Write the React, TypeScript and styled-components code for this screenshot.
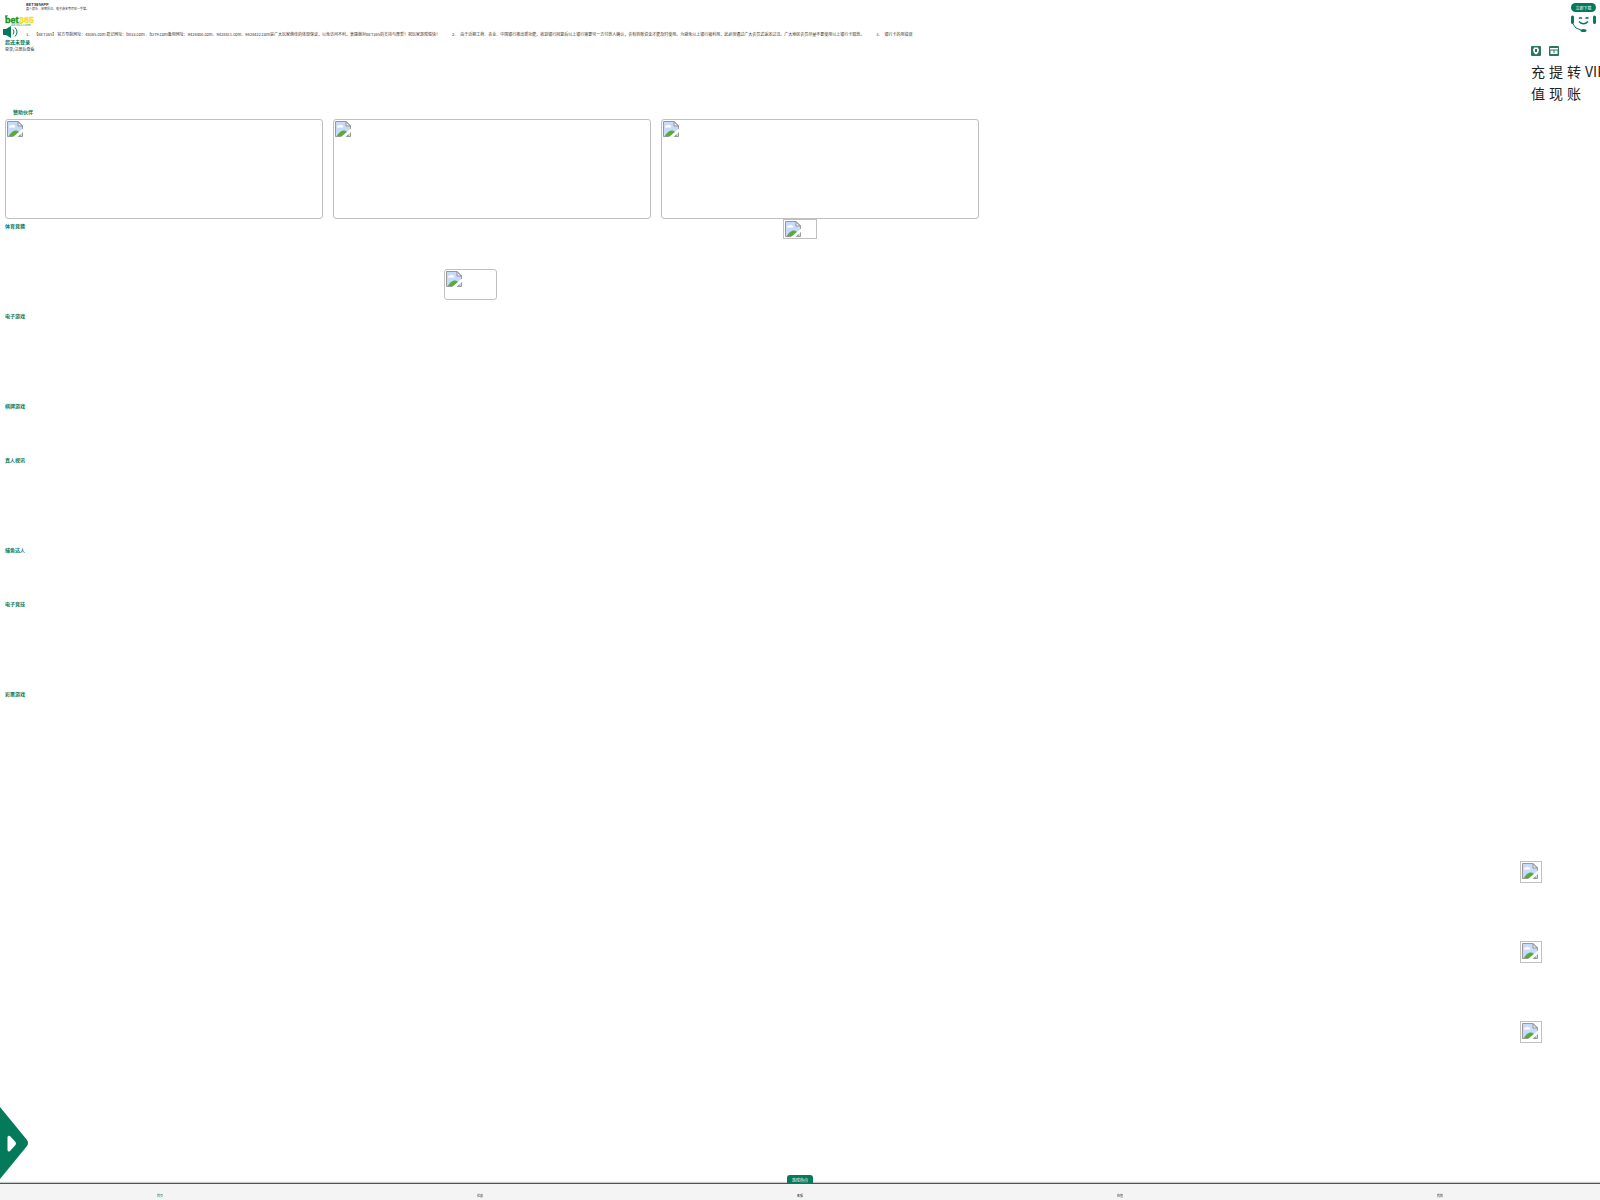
import React from "react";
import styled, { createGlobalStyle } from "styled-components";

const GREEN = "#047a5b";

const GlobalStyle = createGlobalStyle`
  * { box-sizing: border-box; }
  body {
    margin: 0;
    background: #fff;
    color: #333;
    font-family: "Noto Sans CJK SC", sans-serif;
    font-size: 4px;
    line-height: 6px;
  }
  button { font-family: inherit; border: 0; padding: 0; margin: 0; background: none; cursor: pointer; }
  a { color: inherit; text-decoration: none; }
  h1, h2, p, ul, ol { margin: 0; padding: 0; list-style: none; font-weight: normal; }
  svg { display: block; }
`;

const Page = styled.div`
  min-height: 100vh;
  overflow: hidden;
`;

const Top = styled.header`
  display: flex;
  justify-content: space-between;
  height: 105px;
`;

const TopMain = styled.div`
  flex: 1;
  min-width: 0;
`;

const AppInfo = styled.div`
  padding: 2px 0 0 26px;
  height: 15px;
`;

const AppName = styled.h1`
  font-size: 4px;
  line-height: 5px;
  font-weight: bold;
`;

const AppSlogan = styled.p`
  font-size: 3px;
  line-height: 4px;
`;

const Logo = styled.a`
  display: block;
  width: 29px;
  height: 11px;
  margin-left: 5px;
  text {
    font-family: "Liberation Sans", sans-serif;
  }
`;

const Notice = styled.div`
  display: flex;
  align-items: center;
  height: 12px;
  padding-left: 3px;
  gap: 8px;
`;

const NoticeList = styled.ol`
  display: flex;
  gap: 12px;
  padding-top: 4px;
  white-space: nowrap;
  li { display: flex; gap: 2px; }
`;

const Account = styled.div`
  padding: 0 0 0 5px;
`;

const AccountState = styled.p`
  font-size: 5px;
  line-height: 8px;
  font-weight: bold;
  color: ${GREEN};
`;

const TopSide = styled.div`
  width: 69px;
  padding-top: 3px;
`;

const SideTools = styled.div`
  display: flex;
  flex-direction: column;
  align-items: flex-end;
  gap: 1px;
  height: 43px;
  padding-right: 4px;
`;

const Download = styled.button`
  width: 25px;
  height: 9px;
  border-radius: 5px;
  background: ${GREEN};
  color: #fff;
  font-size: 4px;
  line-height: 6px;
`;

const QuickList = styled.ul`
  display: flex;
  gap: 8px;
`;

const QuickItem = styled.li`
  flex: none;
  width: 10px;
`;

const QuickLink = styled.a`
  display: block;
  color: #222;
  font-size: 14px;
  line-height: 22px;
`;

const QuickIcon = styled.span`
  display: block;
  height: 14px;
`;

const Title = styled.h2<{ $inset?: boolean }>`
  padding-left: ${(p) => (p.$inset ? "13px" : "5px")};
  color: ${GREEN};
  font-size: 5px;
  line-height: 14px;
  font-weight: bold;
`;

const Sponsors = styled.div`
  display: flex;
  gap: 10px;
  padding-left: 5px;
`;

const Frame = styled.span<{ $w: string; $h: number; $round?: boolean }>`
  display: block;
  width: ${(p) => p.$w};
  height: ${(p) => p.$h}px;
  padding: 1px;
  border: 1px solid #c0c0c0;
  border-radius: ${(p) => (p.$round ? "3px" : "0")};
  background: #fff;
`;

const Section = styled.section<{ $tall?: boolean }>`
  height: ${(p) => (p.$tall ? "90px" : "54px")};
`;

const SectionHead = styled.div`
  display: grid;
  grid-template-columns: 1fr auto 1fr;
  align-items: start;
`;

const SectionBody = styled.div`
  padding: 30px 0 0 27.75%;
`;

const Floating = styled.aside`
  position: fixed;
  right: 58px;
  bottom: 157px;
  display: flex;
  flex-direction: column;
  gap: 58px;
`;

const Drawer = styled.button`
  position: fixed;
  left: 0;
  bottom: 20px;
`;

const Footer = styled.nav`
  position: fixed;
  left: 0;
  right: 0;
  bottom: 0;
  height: 17px;
  display: grid;
  grid-template-columns: repeat(5, 1fr);
  border-top: 1px solid ${GREEN};
  box-shadow: 0 -1px 1px #ccc;
  background: #f4f4f4;
`;

const Tab = styled.a<{ $active?: boolean }>`
  padding-top: 9px;
  text-align: center;
  font-size: 3px;
  line-height: 6px;
  color: ${(p) => (p.$active ? GREEN : "#333")};
`;

const HotTab = styled.button`
  position: absolute;
  left: 50%;
  bottom: 100%;
  width: 26px;
  height: 9px;
  margin-left: -13px;
  border-radius: 3px 3px 0 0;
  background: ${GREEN};
  color: #fff;
  font-size: 4px;
  line-height: 8px;
`;

function Picture(props: { w: string; h: number; round?: boolean }) {
  return (
    <Frame $w={props.w} $h={props.h} $round={props.round}>
      <svg width="16" height="16" viewBox="0 0 16 16">
        <path d="M0.500 0.500H11L15.500 5V15.500H0.500Z" fill="#c8dafa" />
        <path d="M2 6a1.500 1.500 0 0 1 2-1.500 1.800 1.800 0 0 1 3 0A1.200 1.200 0 0 1 8 6.500H2Z" fill="#fff" />
        <path d="M1.500 15.500C4 11 7 9.500 9 9.500S12 11 13.500 12.500V15.500Z" fill="#57ad35" />
        <path d="M11 .5V5H15.500Z" fill="#f5f5f5" stroke="#909090" />
        <path d="M.5 15.500V.5H11L15.500 5V15.500Z" fill="none" stroke="#999" />
        <path d="M16 7.500V11L10.500 16H6Z" fill="#fff" />
      </svg>
    </Frame>
  );
}

const notices = [
  "【BET365】 官方导航网址：48365.com 易记网址：b033.com 、b279.com备用网址：9428400.com、9428411.com、9428422.com是广大玩家绝佳的体现保证，以免访问不利，衷感谢对BET365的支持与厚爱！祝玩家游戏愉快！",
  "由于近期工商、农业、中国银行推出新功能，收到银行回复后以上银行需要另一方付款人确认，会有转账资金才能及时使用。为避免以上银行被利用，此必须通过广大会员式返还过流。广大地区会员尽量不要使用以上银行卡取款。",
  "银行卡的用错误",
];

const sections: [string, boolean][] = [
  ["电子游戏", true],
  ["棋牌游戏", false],
  ["真人视讯", true],
  ["捕鱼达人", false],
  ["电子竞技", true],
  ["彩票游戏", true],
];

const tabs = ["首页", "优惠", "客服", "充值", "我的"];

function QuickGlyph({ kind }: { kind: string }) {
  return (
    <svg width="10" height="10" viewBox="0 0 10 10">
      <rect width="10" height="10" rx="1" fill="#2b7759" />
      {kind === "deposit" ? (
        <>
          <path d="M3 1.500H7L8 4 7 7 5 8.500 3 7 2 4Z" fill="#fff" />
          <path d="M4 3h2v3H4Z" fill="#2b7759" />
        </>
      ) : (
        <>
          <path d="M1 2H9V3.500H1ZM1.500 4.500H8.500V8H1.500Z" fill="#fff" />
          <path d="M4.500 4h1v3h-1Z" fill="#2b7759" />
        </>
      )}
    </svg>
  );
}

export default function App() {
  return (
    <Page>
      <GlobalStyle />
      <Top>
        <TopMain>
          <AppInfo>
            <AppName>BET365APP</AppName>
            <AppSlogan>真人娱乐、体育投注，电子游艺等尽在一手掌。</AppSlogan>
          </AppInfo>
          <Logo href="#" aria-label="bet365">
            <svg width="29" height="11" viewBox="0 0 29 11">
              <path d="M0 0h3v1H1v2H0Z" fill="#aaa" />
              <text x="0" y="8" fontSize="9" fontWeight="bold" fill="#129412" stroke="#129412" strokeWidth="0.4">bet</text>
              <text x="14" y="8" fontSize="9" fontWeight="bold" fill="#f7df18" stroke="#f7df18" strokeWidth="0.4">365</text>
              <text x="6" y="11" fontSize="4" fill="#28a06c">48365.com</text>
            </svg>
          </Logo>
          <Notice>
            <svg width="15" height="12" viewBox="0 0 15 12" fill="none" stroke={GREEN}>
              <path d="M0 3H3L8 0V12L3 9H0Z" fill={GREEN} stroke="none" />
              <path d="M10 3.500Q12 6 10 8.500M12 1.500Q16 6 12 10.500" />
            </svg>
            <NoticeList>
              {notices.map((text, i) => (
                <li key={i}>
                  <span>{i + 1}、</span>
                  <span>{text}</span>
                </li>
              ))}
            </NoticeList>
          </Notice>
          <Account>
            <AccountState>您还未登录</AccountState>
            <a href="#">登录/注册后查看</a>
          </Account>
        </TopMain>
        <TopSide>
          <SideTools>
            <Download>立即下载</Download>
            <button aria-label="客服">
              <svg width="25" height="20" viewBox="0 0 25 20" fill="none" stroke={GREEN}>
                <path d="M1.500 4V9.500M23.500 4V9.500" strokeWidth="3" strokeLinecap="round" />
                <path d="M8 5.500Q9.500 4 11 5.500M14.500 5.500Q16 4 17.500 5.500" strokeWidth="1.500" />
                <path d="M8 8.500Q12.500 13 17 8.500" strokeWidth="1.500" />
                <path d="M2 11Q4 16 10 17" />
                <ellipse cx="12.500" cy="17.500" rx="3" ry="1.500" fill={GREEN} stroke="none" />
              </svg>
            </button>
          </SideTools>
          <QuickList>
            {["充值", "提现", "转账", "VIP"].map((label, i) => (
              <QuickItem key={label}>
                <QuickLink href="#">
                  <QuickIcon>{i < 2 && <QuickGlyph kind={i ? "withdraw" : "deposit"} />}</QuickIcon>
                  {label}
                </QuickLink>
              </QuickItem>
            ))}
          </QuickList>
        </TopSide>
      </Top>

      <Title $inset>赞助伙伴</Title>
      <Sponsors>
        <Picture w="318px" h={100} round />
        <Picture w="318px" h={100} round />
        <Picture w="318px" h={100} round />
      </Sponsors>

      <Section $tall>
        <SectionHead>
          <Title>体育竞猜</Title>
          <Picture w="34px" h={20} />
        </SectionHead>
        <SectionBody>
          <Picture w="53px" h={31} round />
        </SectionBody>
      </Section>
      {sections.map(([name, tall]) => (
        <Section key={name} $tall={tall}>
          <Title>{name}</Title>
        </Section>
      ))}

      <Floating>
        <Picture w="22px" h={22} />
        <Picture w="22px" h={22} />
        <Picture w="22px" h={22} />
      </Floating>

      <Drawer aria-label="展开">
        <svg width="29" height="73" viewBox="0 0 29 73">
          <path d="M0 0L27 33Q29 36 27 39L0 72Z" fill={GREEN} />
          <path d="M7.500 30Q8 28 10 29L15.500 35Q16.500 36.500 15.500 38L10 44Q8 45.500 7.500 43Z" fill="#fff" />
        </svg>
      </Drawer>

      <Footer>
        {tabs.map((name, i) => (
          <Tab key={name} href="#" $active={i === 0}>
            {name}
          </Tab>
        ))}
        <HotTab>游戏热点</HotTab>
      </Footer>
    </Page>
  );
}
